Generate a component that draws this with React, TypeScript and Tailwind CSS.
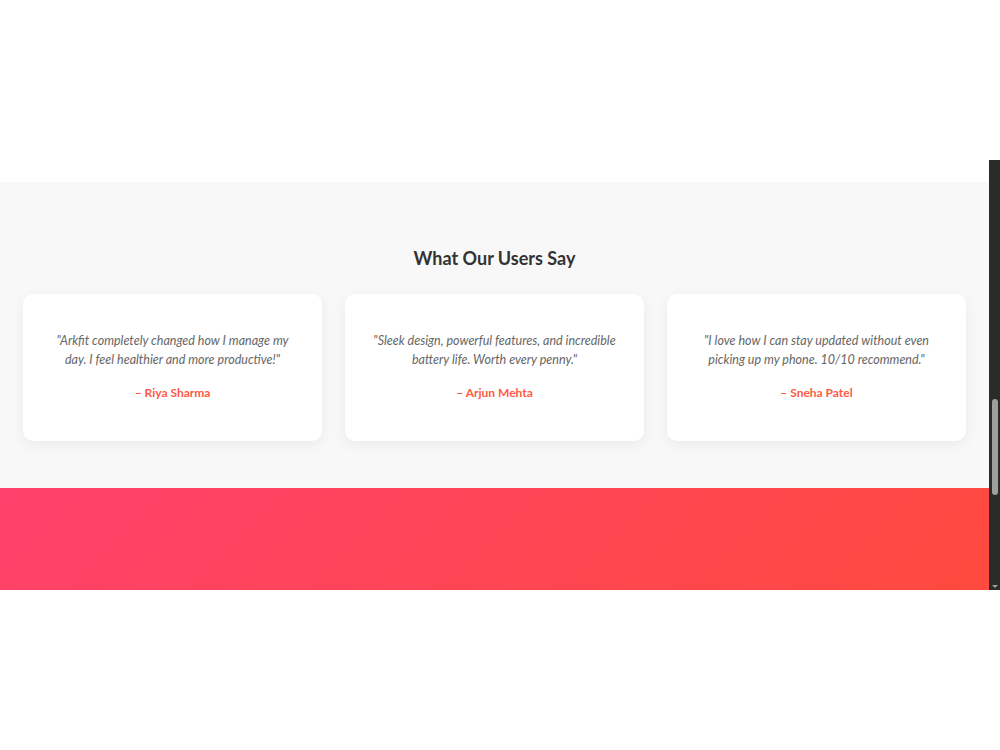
const testimonials = [
  {
    quote: '"Arkfit completely changed how I manage my day. I feel healthier and more productive!"',
    name: 'Riya Sharma',
  },
  {
    quote: '"Sleek design, powerful features, and incredible battery life. Worth every penny."',
    name: 'Arjun Mehta',
  },
  {
    quote: '"I love how I can stay updated without even picking up my phone. 10/10 recommend."',
    name: 'Sneha Patel',
  },
];

function Scrollbar() {
  return (
    <div className="flex w-[11px] shrink-0 flex-col bg-[#2b2b2b] pl-[3px] pr-[2px]">
      <div className="h-[239px]" />
      <div className="h-[96px] w-[6px] rounded-full bg-[#9f9f9f]" />
      <div className="flex-1" />
      <div className="mb-[1px] flex h-[4px] justify-center">
        <div className="h-0 w-0 border-x-[3px] border-t-[3px] border-x-transparent border-t-[#9f9f9f]" />
      </div>
    </div>
  );
}

export default function App() {
  return (
    <div className="min-h-[750px] bg-white font-['Lato',sans-serif]">
      <div className="h-[160px]" />

      <div className="flex h-[430px] overflow-hidden">
        <div className="flex-1 overflow-hidden bg-white">
          <div className="h-[22px]" />

          {/* Testimonials */}
          <section className="bg-[#f8f8f8] px-[23px] pt-[62px] pb-[47px]">
            <h2 className="text-center text-[18px] leading-[28px] font-bold text-[#333]">
              What Our Users Say
            </h2>
            <div className="mt-[22px] grid grid-cols-3 gap-[23px]">
              {testimonials.map((t) => (
                <div
                  key={t.name}
                  className="rounded-[10px] bg-white px-[24px] py-[38px] text-center shadow-[0_4px_14px_rgba(0,0,0,0.06)]"
                >
                  <p className="text-[12.5px] leading-[18.5px] italic text-[#666]">{t.quote}</p>
                  <p className="mt-[14px] text-[12px] leading-[20px] font-bold text-[#ff5a44]">
                    – {t.name}
                  </p>
                </div>
              ))}
            </div>
          </section>

          {/* CTA band */}
          <section className="h-[110px] bg-[linear-gradient(135deg,#ff416c,#ff4a3e)]" />
        </div>
        <Scrollbar />
      </div>
    </div>
  );
}
